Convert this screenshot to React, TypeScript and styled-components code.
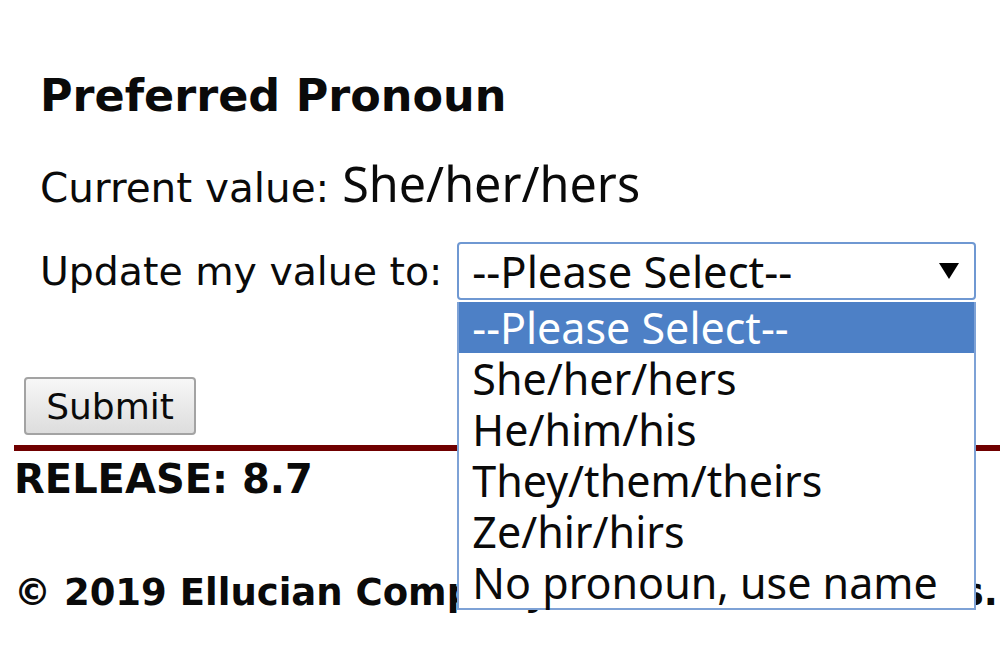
import React from "react";
import styled, { createGlobalStyle } from "styled-components";

const GlobalStyle = createGlobalStyle`
  html, body {
    margin: 0;
    padding: 0;
    background: #ffffff;
    overflow: hidden;
  }
  body {
    font-family: "DejaVu Sans", Verdana, sans-serif;
    color: #0a0a0a;
  }
`;

const Page = styled.div`
  width: 1000px;
  height: 648px;
  padding: 70px 0 0 14px;
  box-sizing: border-box;
  overflow: hidden;
`;

const Form = styled.div`
  padding-left: 26px;
  display: flex;
  flex-direction: column;
`;

const Heading = styled.h2`
  margin: 0;
  font-family: "DejaVu Sans", Verdana, sans-serif;
  font-weight: bold;
  font-size: 44.5px;
  line-height: 52px;
`;

const Line = styled.div`
  margin-top: 37px;
  font-size: 40.5px;
  line-height: 48px;
  white-space: nowrap;
`;

const Value = styled.span`
  font-family: "Noto Sans", "Open Sans", sans-serif;
  font-size: 48.5px;
  line-height: 48px;
`;

const UpdateRow = styled.div`
  margin-top: 30px;
  display: flex;
  align-items: center;
  gap: 15px;
  font-size: 39.4px;
  line-height: 48px;
  white-space: nowrap;
`;

const SelectWrap = styled.div`
  position: relative;
  width: 519px;
`;

const SelectBox = styled.div`
  height: 58px;
  box-sizing: border-box;
  border: 2px solid #6f98d2;
  border-radius: 4px;
  background: #ffffff;
  display: flex;
  align-items: center;
  justify-content: space-between;
  padding: 0 15px 0 13px;
  font-family: "Noto Sans", "Open Sans", sans-serif;
  font-size: 43.5px;
`;

const List = styled.div`
  position: absolute;
  top: 60px;
  left: 0;
  right: 0;
  background: #ffffff;
  border: 2px solid #7ea2d6;
  border-top: none;
  box-sizing: border-box;
  z-index: 2;
`;

const Option = styled.div<{ $active?: boolean }>`
  height: 51px;
  display: flex;
  align-items: center;
  padding-left: 13px;
  font-family: "Noto Sans", "Open Sans", sans-serif;
  font-size: 43px;
  background: ${(p) => (p.$active ? "#4d80c6" : "transparent")};
  color: ${(p) => (p.$active ? "#ffffff" : "#0a0a0a")};
`;

const Submit = styled.button`
  margin: 77px 0 0 10px;
  width: 172px;
  height: 58px;
  border: 2px solid #a3a3a3;
  border-radius: 4px;
  background: linear-gradient(#f7f7f7, #dddddd);
  font-family: "DejaVu Sans", Verdana, sans-serif;
  font-size: 36px;
  color: #0a0a0a;
  padding: 0;
  align-self: flex-start;
`;

const Rule = styled.div`
  margin-top: 10px;
  height: 6px;
  background: #700000;
`;

const Release = styled.div`
  margin-top: 5px;
  font-weight: bold;
  font-size: 40px;
  line-height: 46px;
`;

const Copyright = styled.div`
  margin-top: 69px;
  font-weight: bold;
  font-size: 37px;
  line-height: 44px;
  white-space: nowrap;
`;

const Arrow = () => (
  <svg width="20" height="16" viewBox="0 0 20 16">
    <polygon points="0,0 20,0 10,16" fill="#000" />
  </svg>
);

const options = [
  "--Please Select--",
  "She/her/hers",
  "He/him/his",
  "They/them/theirs",
  "Ze/hir/hirs",
  "No pronoun, use name",
];

export default function App() {
  return (
    <>
      <GlobalStyle />
      <Page>
        <Form>
          <Heading>Preferred Pronoun</Heading>
          <Line>
            Current value: <Value>She/her/hers</Value>
          </Line>
          <UpdateRow>
            <span>Update my value to:</span>
            <SelectWrap>
              <SelectBox>
                <span>--Please Select--</span>
                <Arrow />
              </SelectBox>
              <List>
                {options.map((o, i) => (
                  <Option key={o} $active={i === 0}>
                    {o}
                  </Option>
                ))}
              </List>
            </SelectWrap>
          </UpdateRow>
        </Form>
        <Submit>Submit</Submit>
        <Rule />
        <Release>RELEASE: 8.7</Release>
        <Copyright>© 2019 Ellucian Company L.P. and its affiliates.</Copyright>
      </Page>
    </>
  );
}
